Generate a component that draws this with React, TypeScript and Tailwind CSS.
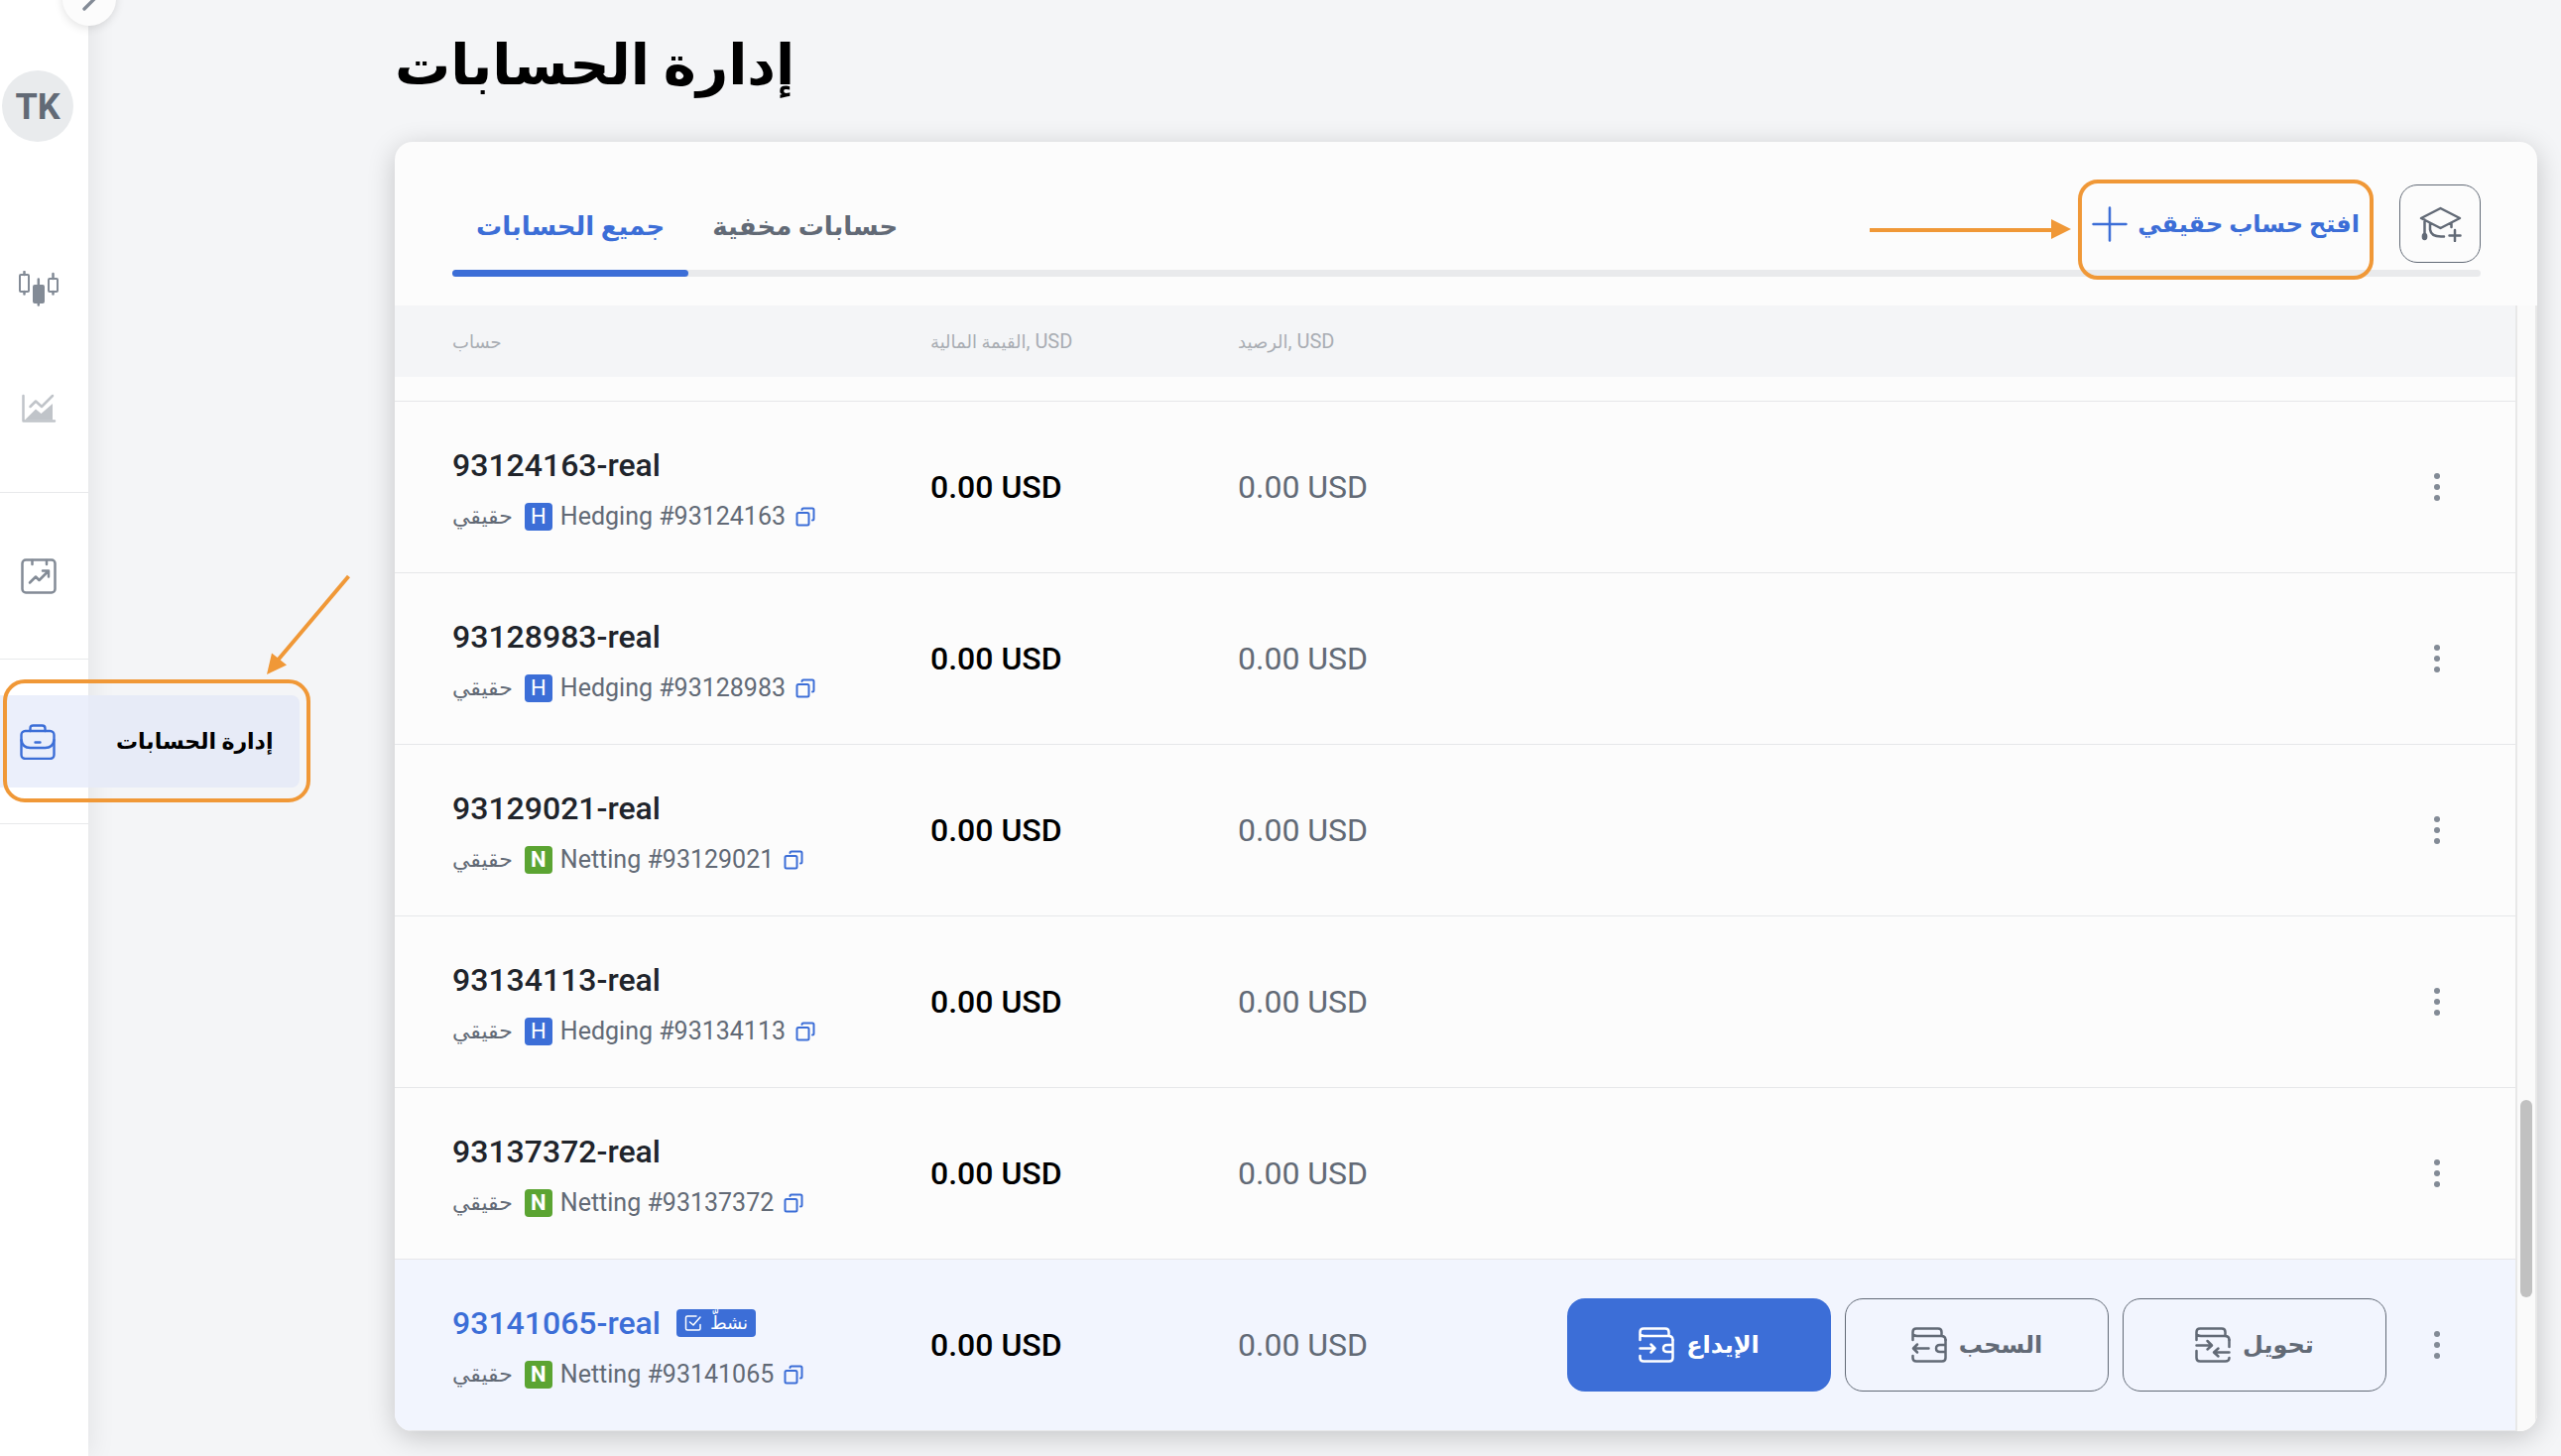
import { useState, type ReactNode } from 'react';
import { ChevronRight } from 'lucide-react';
import clsx from 'clsx';

type Account = {
  id: string;
  mode: 'Hedging' | 'Netting';
  active?: boolean;
};

const accounts: Account[] = [
  { id: '93124163', mode: 'Hedging' },
  { id: '93128983', mode: 'Hedging' },
  { id: '93129021', mode: 'Netting' },
  { id: '93134113', mode: 'Hedging' },
  { id: '93137372', mode: 'Netting' },
  { id: '93141065', mode: 'Netting', active: true }
];

const tabs = [
  { key: 'all', title: 'جميع الحسابات' },
  { key: 'hidden', title: 'حسابات مخفية' }
];

function CandlesIcon() {
  return (
    <svg width="42" height="36" viewBox="0 0 42 36" fill="none" stroke="currentColor" strokeWidth="2" strokeLinecap="round">
      <rect x="2" y="4" width="9" height="17" rx="1" />
      <path d="M6.500 1v3M6.500 21v2.500M20.800 8.500v7M20.800 32v2.500M35.500 3v5M35.500 21v2.500" strokeWidth="2.500" />
      <rect x="16" y="15" width="10" height="17" rx="1" fill="currentColor" />
      <rect x="31" y="8" width="9" height="13" rx="1" />
    </svg>
  );
}

function AreaChartIcon() {
  return (
    <svg width="36" height="30" viewBox="0 0 36 30" fill="none" stroke="currentColor" strokeWidth="2.500" strokeLinecap="round" strokeLinejoin="round">
      <path d="M2.500 2v25.500H34M9.500 13l5.500-5.500 6 5.500L32 2" />
      <path d="M4 26.500 15 15.500l5.500 4.500L32 10v16.500z" fill="currentColor" stroke="none" />
    </svg>
  );
}

function AnalyticsIcon() {
  return (
    <svg width="36" height="36" viewBox="0 0 36 36" fill="none" stroke="currentColor" strokeWidth="2.500" strokeLinecap="round" strokeLinejoin="round">
      <rect x="1.500" y="1.500" width="33" height="33" rx="3.500" />
      <path d="M11.500 2v4M26 2v4M9 24.500l6-6 3.500 3.500 9-9M22 12.500h6v6" />
    </svg>
  );
}

function BriefcaseIcon() {
  return (
    <svg width="36" height="36" viewBox="0 0 36 36" fill="none" stroke="currentColor" strokeWidth="2.400" strokeLinecap="round" strokeLinejoin="round">
      <path d="M10.500 7V4.500Q10.500 1.500 13.500 1.500h9q3 0 3 3V7" />
      <rect x="1.500" y="7" width="33" height="28" rx="4" />
      <path d="M1.500 16q1 8 9 8h15q8 0 9-8M15.500 18.500h5" />
    </svg>
  );
}

function GraduationPlusIcon() {
  return (
    <svg width="44" height="36" viewBox="0 0 44 36" fill="none" stroke="currentColor" strokeWidth="2.500" strokeLinecap="round" strokeLinejoin="round">
      <path d="M22.500 2 42 12 22.500 22 3 12zM6.500 13.500V27M12 17v6.500q1 7 11 7h3M33.500 17.500V21" />
      <ellipse cx="6.500" cy="30.500" rx="1.600" ry="2.500" fill="currentColor" />
      <path d="M37 24v11M31.500 29.500h11" />
    </svg>
  );
}

function WalletIcon({ kind }: { kind: 'deposit' | 'withdraw' | 'transfer' }) {
  return (
    <svg width="36" height="36" viewBox="0 0 36 36" fill="none" stroke="currentColor" strokeWidth="2.500" strokeLinecap="round" strokeLinejoin="round">
      <path d="M1.500 13V5q0-3.500 3.500-3.500h22q3.500 0 3.500 3.500v4M1.500 7.500Q3 9 6 9h24q4.500 0 4.500 4" />
      {kind === 'transfer' ? (
        <path d="M34.500 13v7M1.500 24v7q0 3.500 3.500 3.500h25.500q4 0 4-3.500M1.500 18.500h15M12.500 14l4.500 4.500-4.500 4M34.500 25.500H20M23.500 21.500l-4.500 4 4.500 4" />
      ) : (
        <path d="M34.500 13v18q0 3.500-3.500 3.500H5q-3.500 0-3.500-3.500v-2M34.500 18h-5.500q-4 0-4 3.500t4 3.500h5.500" />
      )}
      {kind === 'deposit' && <path d="M1.500 21.500h15M12.500 17.500l4 4-4 4" />}
      {kind === 'withdraw' && <path d="M17.500 21.500h-15M6 17.500l-4 4 4 4" />}
    </svg>
  );
}

function CopyIcon() {
  return (
    <svg width="20" height="20" viewBox="0 0 20 20" fill="none" stroke="currentColor" strokeWidth="2" strokeLinejoin="round" strokeLinecap="round">
      <rect x="1.500" y="6" width="12" height="12.500" rx="1.500" />
      <path d="M6.500 3q0-1.500 1.500-1.500h9q1.500 0 1.500 1.500v9q0 1.500-1.500 1.500" />
    </svg>
  );
}

function CheckSquareIcon() {
  return (
    <svg width="18" height="18" viewBox="0 0 18 18" fill="none" stroke="currentColor" strokeWidth="1.500" strokeLinecap="round" strokeLinejoin="round">
      <path d="M12 2H3q-1.500 0-1.500 1.500v11Q1.500 16 3 16h11.500q1.500 0 1.500-1.500v-4M5.500 8l3.500 3 7-8" />
    </svg>
  );
}

function NavLink({ label, className, children }: { label: string; className?: string; children: ReactNode }) {
  return (
    <a href="#" aria-label={label} className={clsx('flex w-full items-center justify-center pr-3', className)}>
      {children}
    </a>
  );
}

function Sidebar() {
  return (
    <aside className="relative z-10 w-[89px] shrink-0 bg-white shadow-[4px_0_24px_rgba(0,0,0,0.07)]">
      <button
        type="button"
        aria-label="Expand"
        className="absolute -top-7 left-[63px] flex size-[54px] items-center justify-center rounded-full bg-[#fcfcfc] text-[#838b96] shadow-[0_2px_10px_rgba(0,0,0,0.12)]"
      >
        <ChevronRight className="size-10" strokeWidth={2} />
      </button>

      <nav className="flex flex-col">
        <div className="flex flex-col border-b border-[#e8e9eb] pb-[38px] text-[#838b96]">
          <span className="mt-[71px] ml-0.5 flex size-[72px] items-center justify-center rounded-full bg-[#e9ebed] pt-0.5 text-[36px] font-bold text-[#626a76]">
            TK
          </span>
          <NavLink label="Terminal" className="mt-[102px] h-[92px]">
            <CandlesIcon />
          </NavLink>
          <NavLink label="Charts" className="mt-[29px] h-[92px] text-[#c0c4c9]">
            <AreaChartIcon />
          </NavLink>
        </div>
        <div className="border-b border-[#e8e9eb] py-[37px] text-[#838b96]">
          <NavLink label="Analytics" className="h-[93px]">
            <AnalyticsIcon />
          </NavLink>
        </div>
        <div className="border-b border-[#e8e9eb] py-9">
          <a
            href="#"
            className="flex h-[93px] w-[302px] items-center gap-[61px] rounded-r-lg bg-[linear-gradient(90deg,#ebeffb_89px,#e7ebf7_89px)] pl-5 text-[#3c6ed7]"
          >
            <BriefcaseIcon />
            <span dir="rtl" className="text-[22px] font-bold whitespace-nowrap text-black">
              إدارة الحسابات
            </span>
          </a>
        </div>
      </nav>

      {/* callout around the accounts link */}
      <div className="pointer-events-none absolute top-[685px] left-[3px] h-[124px] w-[310px] rounded-[22px] border-4 border-[#f09837]" />
      <svg className="pointer-events-none absolute top-[578px] left-[264px]" width="92" height="104" viewBox="0 0 92 104">
        <path d="M87.500 3 14 90" stroke="#f09837" strokeWidth="4" />
        <path d="M5 102 10 80.500 25 92.500z" fill="#f09837" />
      </svg>
    </aside>
  );
}

function ActionButton({ kind, primary, children }: { kind: 'deposit' | 'withdraw' | 'transfer'; primary?: boolean; children: ReactNode }) {
  return (
    <button
      type="button"
      className={clsx(
        'flex h-[94px] w-[266px] cursor-pointer items-center justify-center gap-3 rounded-[18px] text-[24px] font-bold',
        primary ? 'bg-[#3c6ed7] text-white' : 'border border-[#626a76] text-[#626a76]'
      )}
    >
      <WalletIcon kind={kind} />
      <span dir="rtl">{children}</span>
    </button>
  );
}

function AccountRow({ account }: { account: Account }) {
  const hedging = account.mode === 'Hedging';

  return (
    <tr className={clsx('h-[173px] border-b border-[#e6e7e9]', account.active && 'bg-[#f2f5fe]')}>
      <td className="pt-1 pl-[58px]">
        <div className="flex items-center gap-4">
          <span className={clsx('text-[32px] leading-10 font-medium', account.active ? 'text-[#3c6ed7]' : 'text-[#20242b]')}>
            {account.id}-real
          </span>
          {account.active && (
            <span className="flex h-7 items-center gap-2 rounded bg-[#3c6ed7] px-2 text-white">
              <CheckSquareIcon />
              <span dir="rtl" className="text-[18px] leading-7">نشطّ</span>
            </span>
          )}
        </div>
        <div className="mt-4 flex items-center text-[25px] leading-8 text-[#626a76]">
          <span dir="rtl" className="text-[22px]">حقيقي</span>
          <span
            className={clsx(
              'mr-2 ml-3 flex size-7 items-center justify-center rounded text-[22px] text-white',
              hedging ? 'bg-[#3c6ed7]' : 'bg-[#5ba432] font-bold'
            )}
          >
            {hedging ? 'H' : 'N'}
          </span>
          {account.mode} #{account.id}
          <button type="button" aria-label="Copy account number" className="ml-2.5 cursor-pointer text-[#3c6ed7]">
            <CopyIcon />
          </button>
        </div>
      </td>
      <td className="text-[32px] font-medium text-black">0.00 USD</td>
      <td className="text-[32px] text-[#626a76]">0.00 USD</td>
      <td>
        {account.active && (
          <div className="flex justify-end gap-[14px]">
            <ActionButton kind="deposit" primary>الإيداع</ActionButton>
            <ActionButton kind="withdraw">السحب</ActionButton>
            <ActionButton kind="transfer">تحويل</ActionButton>
          </div>
        )}
      </td>
      <td className="pl-[46px]">
        <button type="button" aria-label="More" className="flex cursor-pointer flex-col gap-[5px] p-0.5">
          <span className="size-1.5 rounded-full bg-[#838b96]" />
          <span className="size-1.5 rounded-full bg-[#838b96]" />
          <span className="size-1.5 rounded-full bg-[#838b96]" />
        </button>
      </td>
    </tr>
  );
}

export default function App() {
  const [tab, setTab] = useState('all');

  return (
    <div className="flex min-h-screen overflow-hidden bg-[#f4f5f7] font-[Roboto,'DejaVu_Sans',sans-serif]">
      <Sidebar />

      <main className="min-w-0 flex-1 pr-6 pb-[25px] pl-[309px]">
        <h1 className="flex h-[143px] items-start pt-7 text-[56px] leading-[76px] font-bold text-black">
          <span dir="rtl">إدارة الحسابات</span>
        </h1>

        <section className="overflow-clip rounded-[18px] bg-[#fcfcfc] shadow-[0_6px_28px_rgba(0,0,0,0.2)]">
          <header className="relative mr-[57px] ml-[58px] flex h-[136px] items-end justify-between">
            <span className="absolute inset-x-0 bottom-0 h-[7px] rounded bg-[#e9eaec]" />
            <div role="tablist" className="relative flex">
              {tabs.map(({ key, title }) => (
                <button
                  key={key}
                  type="button"
                  role="tab"
                  aria-selected={tab === key}
                  className={clsx(
                    'relative h-[81px] cursor-pointer px-6 pb-5 text-[26px] font-bold',
                    tab === key ? 'text-[#3c6ed7]' : 'text-[#626a76]'
                  )}
                  onClick={() => setTab(key)}
                >
                  <span dir="rtl">{title}</span>
                  {tab === key && <span className="absolute inset-x-0 bottom-0 h-[7px] rounded bg-[#3c6ed7]" />}
                </button>
              ))}
            </div>

            <div className="relative flex items-end">
              <svg width="204" height="20" viewBox="0 0 204 20" className="mr-1.5 mb-[38px]">
                <path d="M0 11h186" stroke="#f09837" strokeWidth="4" />
                <path d="M183 0v20l20-10z" fill="#f09837" />
              </svg>
              <div className="-mb-[3px] h-[101px] rounded-[20px] border-4 border-[#f09837]">
                <button type="button" className="flex h-[82px] cursor-pointer items-center gap-2.5 px-2.5 text-[24px] font-bold text-[#3c6ed7]">
                  <svg width="36" height="36" viewBox="0 0 36 36" stroke="currentColor" strokeWidth="2.500" strokeLinecap="round">
                    <path d="M18 1.500v33M1.500 18h33" />
                  </svg>
                  <span dir="rtl">افتح حساب حقيقي</span>
                </button>
              </div>
              <button
                type="button"
                aria-label="Open demo account"
                className="mb-[14px] ml-[26px] flex h-[79px] w-[82px] cursor-pointer items-center justify-center rounded-[18px] border border-[#626a76] text-[#626a76]"
              >
                <GraduationPlusIcon />
              </button>
            </div>
          </header>

          <div className="mt-[29px] flex">
            <div className="min-w-0 flex-1">
              <table className="w-full table-fixed border-collapse">
                <colgroup>
                  <col className="w-[540px]" />
                  <col className="w-[310px]" />
                  <col className="w-[310px]" />
                  <col />
                  <col className="w-[130px]" />
                </colgroup>
                <thead>
                  <tr className="h-[72px] bg-[#f4f5f7] text-left text-[20px] text-[#a9adb3]">
                    <th className="pl-[58px] text-[18px] font-normal">حساب</th>
                    <th className="font-normal"><bdi className="text-[18px]">القيمة المالية</bdi>, USD</th>
                    <th className="font-normal"><bdi className="text-[18px]">الرصيد</bdi>, USD</th>
                    <th />
                    <th />
                  </tr>
                </thead>
                <tbody>
                  <tr className="h-6 border-b border-[#e6e7e9]">
                    <td colSpan={5} />
                  </tr>
                  {accounts.map((account) => (
                    <AccountRow key={account.id} account={account} />
                  ))}
                </tbody>
              </table>
            </div>
            <div className="flex w-[22px] shrink-0 flex-col items-center border-x-2 border-[#e8e8e8] bg-[#fafafa]">
              <div className="mt-[801px] h-[199px] w-3 rounded-full bg-[#c1c1c1]" />
            </div>
          </div>
        </section>
      </main>
    </div>
  );
}
